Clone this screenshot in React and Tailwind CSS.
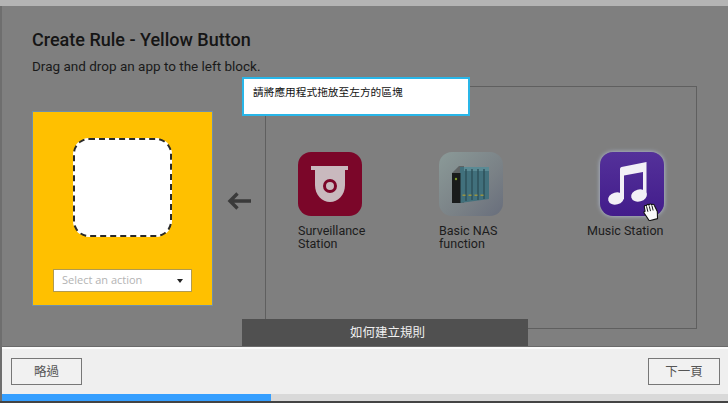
import React from "react";

function SurveillanceIcon() {
  return (
    <svg width="64" height="64" viewBox="0 0 64 64">
      <rect width="64" height="64" rx="13" fill="#7b0629" />
      <rect x="13" y="14" width="37" height="4" fill="#c9b9be" />
      <path d="M17 18V33C17 43 24 50 32 50C40 50 47 43 47 33V18Z" fill="#c9b9be" />
      <circle cx="32" cy="34" r="5.5" fill="none" stroke="#7b0629" strokeWidth="3" />
    </svg>
  );
}

function NasIcon() {
  return (
    <svg width="64" height="64" viewBox="0 0 64 64">
      <defs>
        <linearGradient id="nasbg" x1="0" y1="0" x2="1" y2="1">
          <stop offset="0" stopColor="#8b9a98" />
          <stop offset="0.6" stopColor="#7a8186" />
          <stop offset="1" stopColor="#686e7c" />
        </linearGradient>
      </defs>
      <rect width="64" height="64" rx="13" fill="url(#nasbg)" />
      <path d="M13 21L20 14H25V51H13Z" fill="#5f6364" />
      <path d="M21 15H50V47L21 51Z" fill="#41707c" />
      <path d="M25 15H50V19H25Z" fill="#5a8a94" />
      <rect x="13" y="21" width="8.5" height="30" fill="#191b1b" />
      <circle cx="17" cy="27" r="1.2" fill="#7f9a2a" />
      <g stroke="#2d4f58" strokeWidth="1.4">
        <path d="M27 17V49M33 17V48M39 17V48M45 17V47" />
      </g>
      <g fill="#9a9440">
        <rect x="23.5" y="42.5" width="3" height="1.5" />
        <rect x="29.5" y="42.5" width="3" height="1.5" />
        <rect x="35.5" y="42.5" width="3" height="1.5" />
        <rect x="41.5" y="42.5" width="3" height="1.5" />
      </g>
    </svg>
  );
}

function MusicIcon() {
  return (
    <svg width="64" height="64" viewBox="0 0 64 64">
      <defs>
        <linearGradient id="musicbg" x1="0" y1="0" x2="0" y2="1">
          <stop offset="0" stopColor="#54319a" />
          <stop offset="1" stopColor="#421c8b" />
        </linearGradient>
      </defs>
      <rect width="64" height="64" rx="13" fill="url(#musicbg)" />
      <path d="M20 17Q20 15.5 21.5 15L46.5 10V43H43V20L24 23.5V47H20Z" fill="#f2f0f6" />
      <ellipse cx="16" cy="46.5" rx="8" ry="6" transform="rotate(-15 16 46.5)" fill="#f2f0f6" />
      <ellipse cx="39" cy="43.5" rx="8" ry="6" transform="rotate(-15 39 43.5)" fill="#f2f0f6" />
    </svg>
  );
}

function HandCursor() {
  return (
    <svg width="18" height="20" viewBox="0 0 18 20" className="absolute left-[42px] top-[49px]">
      <g transform="rotate(-14 9 10)">
        <path
          d="M5 19L2 11C1.5 9.5 2 8.5 3.2 8.8L3.5 4.5C3.6 3 5.6 3 5.8 4.2C6 2.4 8.3 2.4 8.5 4C8.8 2.6 11 2.6 11.2 4.4C11.6 3.4 13.6 3.8 13.6 5.4L15 12L13.5 19Z"
          fill="#fafafa"
          stroke="#111"
          strokeWidth="1.1"
          strokeLinejoin="round"
        />
        <path d="M5.8 5V10M8.5 5V10M11.2 5V10" stroke="#111" strokeWidth="0.9" />
      </g>
    </svg>
  );
}

function AppItem({ icon, children, className = "", labelClass = "", glow = false, extra = null }) {
  return (
    <div className={`w-[64px] shrink-0 ${className}`}>
      <div className={`relative h-[64px] w-[64px] rounded-[13px] ${glow ? "shadow-[0_0_4px_0_#b6c2dc]" : ""}`}>
        {icon}
        {extra}
      </div>
      <div className={`mt-[8px] text-[12.5px] leading-[13px] text-[#1c1c1c] ${labelClass}`}>
        {children}
      </div>
    </div>
  );
}

export default function App() {
  return (
    <div className="flex h-[403px] w-[728px] flex-col overflow-hidden font-['Roboto','Noto_Sans_CJK_TC',sans-serif]">
      <div className="h-[6px] shrink-0 bg-[#b4b4b4]" />
      <div className="flex h-[395px] shrink-0 flex-col bg-[#6e6e6e] pl-[2px]">
        <main className="relative h-[341px] shrink-0 border-b border-[#6a6a6a] bg-[#7f7f7f] pt-[24px] pl-[30px]">
          <h1 className="text-[18px] leading-[20px] font-medium text-[#151515]">Create Rule - Yellow Button</h1>
          <p className="mt-[8px] text-[13.5px] leading-[16px] text-[#1a1a1a]">Drag and drop an app to the left block.</p>

          <div className="mt-[12px] flex items-start">
            <div className="mt-[25px] flex h-[195px] w-[181px] shrink-0 flex-col items-center border border-[#6f8fa8] bg-[#ffc000] pt-[26px]">
              <div className="h-[99px] w-[99px] rounded-[16px] border-2 border-dashed border-[#2a2a2a] bg-white" />
              <div className="mt-[32px] flex h-[23px] w-[139px] items-center justify-between border border-[#b09a50] bg-white pr-[8px] pl-[8px] font-['Open_Sans',sans-serif] text-[11px] text-[#b3b3b3]">
                <span>Select an action</span>
                <span className="h-0 w-0 border-x-[3.5px] border-t-[4px] border-x-transparent border-t-[#222]" />
              </div>
            </div>

            <svg width="24" height="18" viewBox="0 0 24 18" className="mt-[106px] ml-[14px] shrink-0">
              <path d="M24 9H3M10.5 1.5L3 9L10.5 16.5" fill="none" stroke="#3a3a3a" strokeWidth="3.4" />
            </svg>

            <div className="ml-[14px] flex h-[243px] w-[432px] shrink-0 border border-[#5f5f5f] pt-[65px] pl-[32px]">
              <AppItem icon={<SurveillanceIcon />}>Surveillance<br />Station</AppItem>
              <AppItem icon={<NasIcon />} className="ml-[77px]">Basic NAS<br />function</AppItem>
              <AppItem
                icon={<MusicIcon />}
                className="ml-[97px]"
                labelClass="-ml-[13px] w-[78px] whitespace-nowrap"
                glow
                extra={<HandCursor />}
              >
                Music Station
              </AppItem>
            </div>
          </div>

          <div className="absolute top-[71px] left-[240px] h-[39px] w-[228px] border-2 border-[#29b6e8] bg-white pt-[6px] pl-[9px] text-[10.7px] leading-[16px] text-[#111]">
            請將應用程式拖放至左方的區塊
          </div>

          <div className="absolute bottom-0 left-[240px] flex h-[27px] w-[286px] items-center justify-center bg-[#505050] pt-[1px] pl-[5px] text-[12.5px] text-[#f0f0f0]">
            如何建立規則
          </div>
        </main>

        <footer className="flex h-[47px] shrink-0 items-center justify-between border-t-2 border-[#fbfbfb] bg-[#efefef] pr-[8px] pl-[9px]">
          <button className="h-[27px] w-[71px] border border-[#777] bg-[#f1f1f1] pt-[2px] text-[12.5px] text-[#555]">略過</button>
          <button className="h-[27px] w-[72px] border border-[#777] bg-[#f1f1f1] pt-[2px] text-[12.5px] text-[#555]">下一頁</button>
        </footer>

        <div className="flex h-[7px] shrink-0 bg-[#d9d9d9]">
          <div className="h-full w-[269px] bg-[#359fff]" />
        </div>
      </div>
      <div className="h-[2px] bg-[#444]" />
    </div>
  );
}
